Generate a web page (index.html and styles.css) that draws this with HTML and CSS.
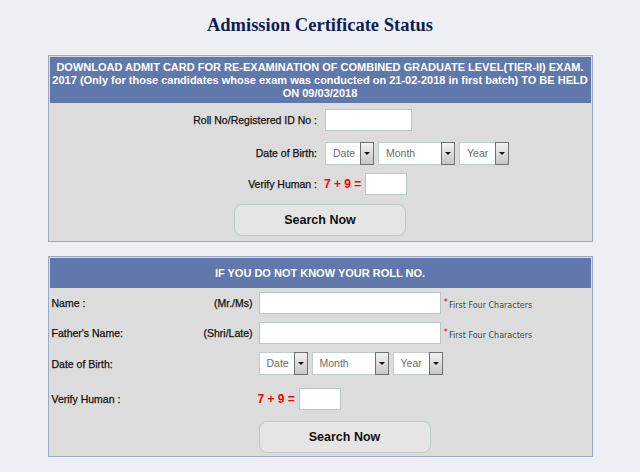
FILE: index.html
```html
<html>
<head>
	<title>Admission Certificate Status</title>
	<link rel="stylesheet" href="styles.css">
</head>
<body>
	<div class="page">
		<h1 class="title">Admission Certificate Status</h1>

		<form class="panel panel-top">
			<div class="panel-head head-tall">DOWNLOAD ADMIT CARD FOR RE-EXAMINATION OF COMBINED GRADUATE LEVEL(TIER-II) EXAM.<br>2017 (Only for those candidates whose exam was conducted on 21-02-2018 in first batch) TO BE HELD<br>ON 09/03/2018</div>
			<div class="form-center">
				<label class="lbl" for="roll">Roll No/Registered ID No :</label>
				<div class="field"><input type="text" id="roll" class="txt w-roll"></div>

				<label class="lbl">Date of Birth:</label>
				<div class="field">
					<span class="sel s-date"><span class="val">Date</span><span class="arr"></span></span>
					<span class="sel s-month"><span class="val">Month</span><span class="arr"></span></span>
					<span class="sel s-year"><span class="val">Year</span><span class="arr"></span></span>
				</div>

				<label class="lbl" for="cap1">Verify Human :</label>
				<div class="field"><span class="sum">7 + 9 =</span><input type="text" id="cap1" class="txt w-cap"></div>

				<div class="btn-row"><button type="button" class="btn">Search Now</button></div>
			</div>
		</form>

		<form class="panel">
			<div class="panel-head head-short">IF YOU DO NOT KNOW YOUR ROLL NO.</div>
			<div class="form-left">
				<div class="lbl2"><span>Name :</span><span>(Mr./Ms)</span></div>
				<div class="field2"><input type="text" class="txt w-name"><span class="hint"><span class="star">*</span>First Four Characters</span></div>

				<div class="lbl2"><span>Father's Name:</span><span>(Shri/Late)</span></div>
				<div class="field2"><input type="text" class="txt w-name"><span class="hint"><span class="star">*</span>First Four Characters</span></div>

				<div class="lbl2"><span>Date of Birth:</span></div>
				<div class="field2">
					<span class="sel s-date"><span class="val">Date</span><span class="arr"></span></span>
					<span class="sel s-month"><span class="val">Month</span><span class="arr"></span></span>
					<span class="sel s-year"><span class="val">Year</span><span class="arr"></span></span>
				</div>

				<div class="lbl2"><span>Verify Human :</span></div>
				<div class="field2"><span class="sum">7 + 9 =</span><input type="text" class="txt w-cap"></div>

				<div></div>
				<div class="field2"><button type="button" class="btn">Search Now</button></div>
			</div>
		</form>
	</div>
</body>
</html>
```

FILE: styles.css
```css
body {
	margin: 8px;
	background-color: #eeeff4;
	font-family: "Liberation Sans", Arial, sans-serif;
}
.page {
	width: 545px;
	margin: 0 auto;
}
.title {
	font-family: "Liberation Serif", "Times New Roman", serif;
	font-size: 18.5px;
	font-weight: bold;
	line-height: 22px;
	color: #0e1d52;
	text-align: center;
	margin: 6px 0 19px;
}
.panel {
	border: 1px solid #9ea7c4;
	padding: 1px;
	background-color: #dcdcdc;
	margin: 0;
}
.panel-top {
	margin-bottom: 14px;
}
.panel-head {
	background-color: #6178ac;
	color: #fff;
	font-weight: bold;
	font-size: 11px;
	text-align: center;
}
.head-tall {
	padding: 4px 0 3px;
	line-height: 13px;
}
.head-short {
	height: 30px;
	line-height: 30px;
}

/* first block: labels right, fields left of the middle */
.form-center {
	display: grid;
	grid-template-columns: 1fr 1fr;
	grid-template-rows: 34px 32px 30px 41px;
	align-items: center;
}
.lbl {
	text-align: right;
	padding-right: 3px;
	font-size: 10.5px;
	color: #111;
	-webkit-text-stroke: 0.25px #111;
}
.field {
	display: flex;
	align-items: center;
	gap: 4px;
	padding-left: 5px;
}
.btn-row {
	grid-column: 1 / -1;
	display: flex;
	justify-content: center;
}

/* second block: three columns */
.form-left {
	display: grid;
	grid-template-columns: 205px 1fr;
	grid-template-rows: 30px 30px 31px 40px 36px;
	align-items: center;
}
.lbl2 {
	display: flex;
	justify-content: space-between;
	padding: 0 2px 0 2px;
	font-size: 10.5px;
	color: #111;
	-webkit-text-stroke: 0.25px #111;
}
.field2 {
	display: flex;
	align-items: center;
	gap: 4px;
	padding-left: 4px;
}

.txt {
	box-sizing: border-box;
	height: 22px;
	border: 1px solid #b6c7c7;
	background-color: #fff;
	padding: 0 3px;
	margin: 0;
}
.w-roll { width: 87px; }
.w-cap { width: 42px; }
.w-name { width: 182px; }

.sel {
	box-sizing: border-box;
	display: inline-flex;
	height: 23px;
	border: 1px solid #bfcccc;
	background-color: #fff;
	font-size: 10.5px;
	color: #6a6a6a;
}
.sel .val {
	flex: 1;
	padding-left: 7px;
	line-height: 21px;
}
.sel .arr {
	box-sizing: border-box;
	width: 14px;
	margin: -1px -1px -1px 0;
	border: 1px solid #707070;
	background: linear-gradient(#f2f2f2, #c6c6c6);
	display: flex;
	align-items: center;
	justify-content: center;
}
.sel .arr::after {
	content: "";
	border-left: 3px solid transparent;
	border-right: 3px solid transparent;
	border-top: 3px solid #111;
}
.s-date { width: 49px; }
.s-month { width: 77px; }
.s-year { width: 50px; }

.sum {
	color: #f00;
	font-weight: bold;
	font-size: 12px;
	margin-left: -1px;
}
.btn {
	width: 172px;
	height: 32px;
	border: 1px solid #b9caca;
	border-radius: 8px;
	background-color: #e6e5e5;
	font-family: "Liberation Sans", Arial, sans-serif;
	font-weight: bold;
	font-size: 12.5px;
	color: #111;
	cursor: pointer;
}
.hint {
	font-family: "DejaVu Sans", Verdana, sans-serif;
	font-size: 8px;
	color: #444;
	margin-left: -1px;
}
.star {
	color: #f00;
	font-size: 9px;
	vertical-align: 3px;
	margin-right: 1px;
}
```
